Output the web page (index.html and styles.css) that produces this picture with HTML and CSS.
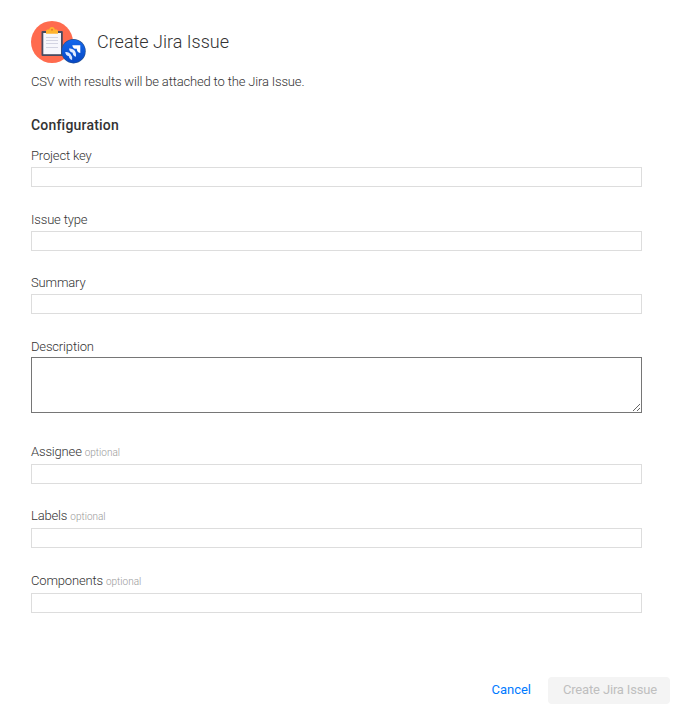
FILE: index.html
```html
<!DOCTYPE html>
<html lang="en">
<head>
<meta charset="utf-8">
<title>Create Jira Issue</title>
<link rel="stylesheet" href="styles.css">
</head>
<body>
<form class="dialog">
  <header class="header">
    <svg class="logo" viewBox="0 0 56 44" aria-hidden="true">
      <defs>
        <linearGradient id="badge" x1="0" y1="0" x2="0" y2="1">
          <stop offset="0" stop-color="#1267ed"/>
          <stop offset="1" stop-color="#0748c4"/>
        </linearGradient>
      </defs>
      <circle cx="21" cy="21" r="21" fill="#ff6b4e"/>
      <rect x="10.5" y="10" width="21.3" height="25" rx="1" fill="#494b60"/>
      <path d="M12.3 12H30V33.2H12.3Z" fill="#f7f7fc"/>
      <path d="M15 16.5H27M15 19.5H27M15 22.5H27M15 26.5H27" stroke="#d3d4e2"/>
      <path d="M15 12.8V10.2Q15 8.6 16.7 8.6H18.3Q18.5 6 21 6T23.7 8.6H25.3Q27 8.6 27 10.2V12.8Z" fill="#ffb42f"/>
      <circle cx="21" cy="8.7" r="1" fill="#e8792f"/>
      <circle cx="42.5" cy="30.2" r="12.2" fill="#244f91"/>
      <circle cx="42.5" cy="30.2" r="11.5" fill="url(#badge)"/>
      <path d="M41.3 24.2H49.3V32.1Q45.7 31.2 45.8 27.8Q41.8 28.1 41.3 24.2Z" fill="#fff"/>
      <path d="M38 27.5Q41 27 43.1 29.1Q45.5 31.5 45 35.8Q41.7 34.7 41.7 31.7Q38.5 31.3 38 27.5Z" fill="#e3ecff"/>
      <path d="M34.2 31.1Q37.2 30.6 39.3 32.7Q41.6 35.1 41.1 39Q38 37.9 37.9 35.2Q34.8 34.8 34.2 31.1Z" fill="#d9e5ff"/>
    </svg>
    <h1 class="title">Create Jira Issue</h1>
  </header>
  <p class="intro">CSV with results will be attached to the Jira Issue.</p>
  <h2 class="section">Configuration</h2>
  <div class="fields">
    <div class="field"><label for="project">Project key</label><input id="project" type="text"></div>
    <div class="field short"><label for="type">Issue type</label><input id="type" type="text"></div>
    <div class="field"><label for="summary">Summary</label><input id="summary" type="text"></div>
    <div class="field description"><label for="description">Description</label><textarea id="description"></textarea></div>
    <div class="field extra"><label for="assignee">Assignee <small>optional</small></label><input id="assignee" type="text"></div>
    <div class="field extra last-gap"><label for="labels">Labels <small>optional</small></label><input id="labels" type="text"></div>
    <div class="field extra"><label for="components">Components <small>optional</small></label><input id="components" type="text"></div>
  </div>
  <footer class="actions">
    <button class="cancel" type="button">Cancel</button>
    <button class="submit" type="submit" disabled>Create Jira Issue</button>
  </footer>
</form>
</body>
</html>
```
FILE: styles.css
```css
* { box-sizing: border-box; }
body {
  margin: 0;
  background: #fff;
  color: #333;
  font: 300 13px/20px Roboto, sans-serif;
}
.dialog {
  display: flex;
  flex-direction: column;
  height: 720px;
  padding: 21px 32px 0 31px;
}
.header { display: flex; gap: 10px; height: 44px; }
.logo { display: block; width: 56px; height: 44px; }
.title { margin: 0; font-size: 18px; font-weight: 300; line-height: 42px; }
.intro { margin: 7px 0 0; letter-spacing: -.165px; }
.section { margin: 23px 0 0; font-size: 14px; font-weight: 500; line-height: 20px; letter-spacing: .2px; }
.fields { margin-top: 11px; }
.field { margin-bottom: 23px; }
.field.short { margin-bottom: 22px; }
.field label { display: block; height: 21px; letter-spacing: -.165px; }
.field small { color: #999; font-size: 10px; letter-spacing: 0; }
.field input, .field textarea {
  display: block;
  width: 100%;
  margin: 0;
  border: 1px solid #ddd;
  border-radius: 0;
  background: #fff;
  font: inherit;
  outline: 0;
}
.field input { height: 20px; }
.field textarea { height: 56px; border-color: #767676; resize: vertical; }
.field.description { margin-bottom: 29px; }
.field.description label { height: 20px; }
.field.extra { margin-bottom: 22px; }
.field.extra.last-gap { margin-bottom: 23px; }
.field.extra label { height: 22px; }
.actions { display: flex; justify-content: flex-end; gap: 17px; margin: 42px -28px 0 0; }
button { border: 0; padding: 0 0 2px; background: none; font: 400 13px/20px Roboto, sans-serif; }
.cancel { color: #007aff; }
.submit { width: 122px; height: 27px; padding-left: 2px; border-radius: 4px; background: #f4f4f4; color: #bfbfbf; letter-spacing: -.165px; }
```
